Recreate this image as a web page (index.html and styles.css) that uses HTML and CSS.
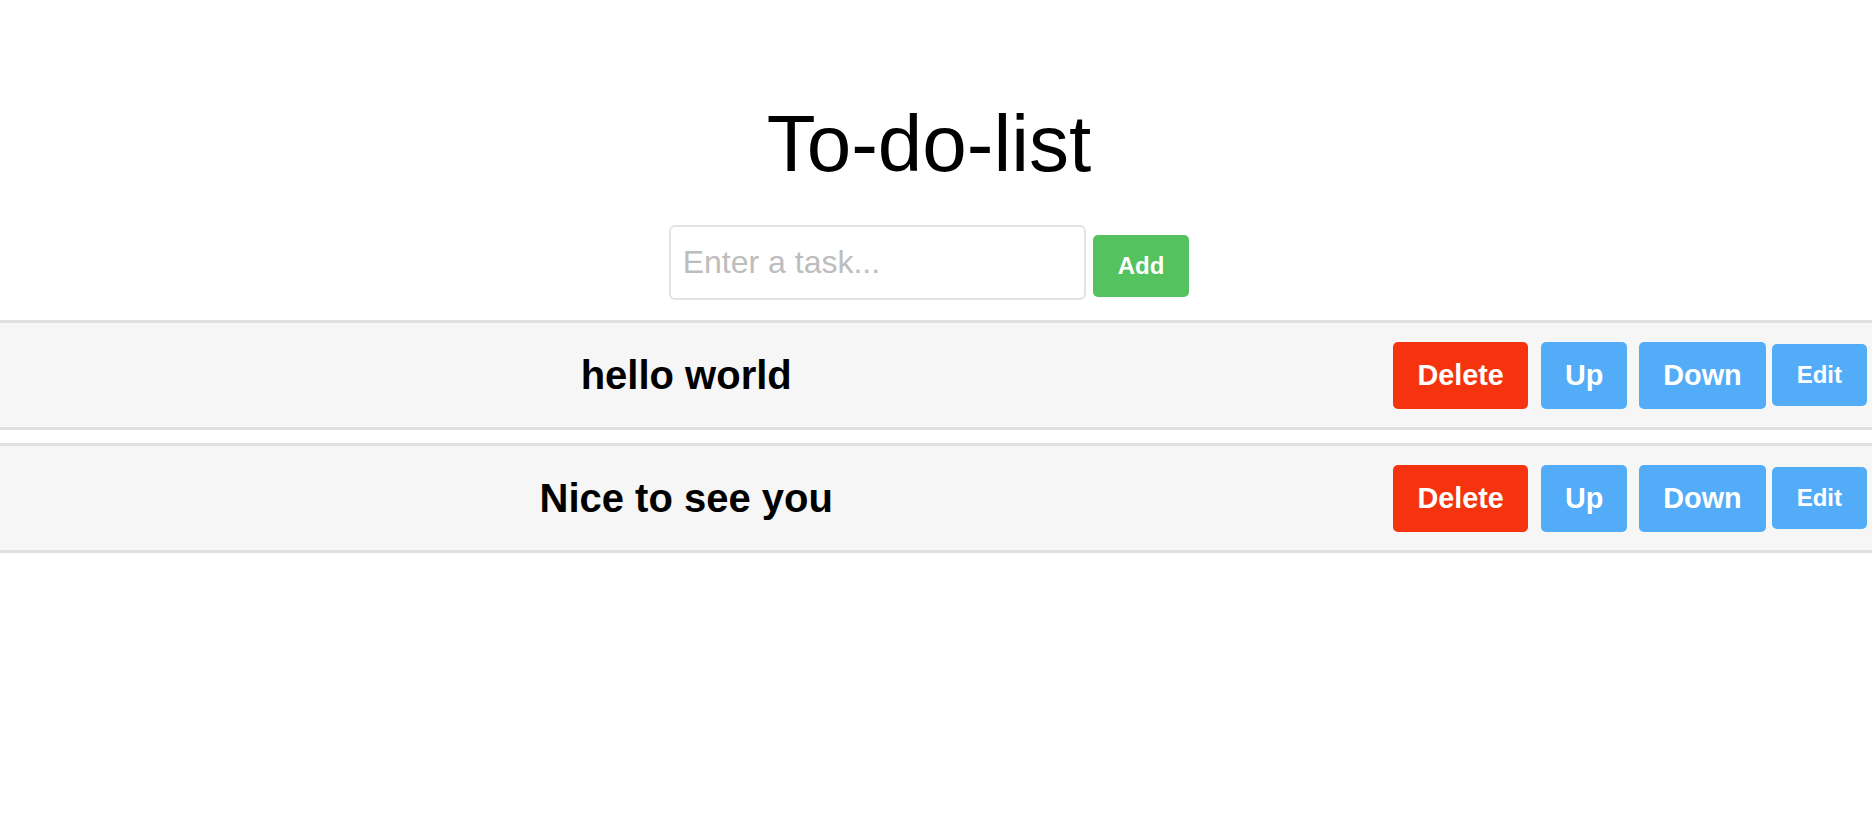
FILE: index.html
```html
<!DOCTYPE html>
<html lang="en">
<head>
<meta charset="utf-8">
<title>To-do-list</title>
<link rel="stylesheet" href="styles.css">
</head>
<body>
<header class="header">
  <h1 class="title">To-do-list</h1>
  <div class="add-row">
    <input class="task-input" type="text" placeholder="Enter a task...">
    <button class="btn btn-add">Add</button>
  </div>
</header>
<ul class="task-list">
  <li class="task">
    <span class="task-text">hello world</span>
    <button class="btn btn-delete">Delete</button>
    <button class="btn btn-up">Up</button>
    <button class="btn btn-down">Down</button>
    <button class="btn btn-edit">Edit</button>
  </li>
  <li class="task">
    <span class="task-text">Nice to see you</span>
    <button class="btn btn-delete">Delete</button>
    <button class="btn btn-up">Up</button>
    <button class="btn btn-down">Down</button>
    <button class="btn btn-edit">Edit</button>
  </li>
</ul>
</body>
</html>
```
FILE: styles.css
```css
* {
  box-sizing: border-box;
}

body {
  margin: 0;
  background: #ffffff;
  font-family: "Liberation Sans", Arial, sans-serif;
  color: #000000;
}

.header {
  display: flex;
  flex-direction: column;
  align-items: center;
  padding-right: 14px;
}

.title {
  margin: 98px 0 0;
  font-size: 80px;
  font-weight: normal;
  line-height: normal;
}

.add-row {
  display: flex;
  align-items: flex-start;
  gap: 7px;
  margin-top: 35px;
}

.task-input {
  width: 417px;
  height: 75px;
  padding: 0 12px;
  border: 2px solid #e3e3e3;
  border-radius: 6px;
  font-family: "Liberation Sans", Arial, sans-serif;
  font-size: 32px;
  color: #000;
  outline: none;
}

.task-input::placeholder {
  color: #bdbdbd;
}

.btn {
  border: none;
  border-radius: 5px;
  color: #ffffff;
  font-family: "Liberation Sans", Arial, sans-serif;
  font-weight: bold;
  font-size: 28.8px;
  line-height: normal;
  padding: 17px 24px;
  cursor: pointer;
}

.btn-add {
  margin-top: 10px;
  background: #53c25f;
  font-size: 24px;
  padding: 17px 25px;
}

.task-list {
  list-style: none;
  margin: 20px 0 0;
  padding: 0;
}

.task {
  display: flex;
  align-items: center;
  height: 110px;
  padding-right: 5px;
  margin-bottom: 13px;
  background: #f6f6f6;
  border-top: 3px solid #e0e0e0;
  border-bottom: 3px solid #e0e0e0;
}

.task-text {
  flex: 1;
  margin-right: 21px;
  text-align: center;
  font-size: 40px;
  font-weight: bold;
}

.btn-delete {
  background: #f5330f;
  margin-right: 13px;
}

.btn-up {
  background: #53acf7;
  margin-right: 12px;
}

.btn-down {
  background: #53acf7;
  margin-right: 6px;
}

.btn-edit {
  background: #53acf7;
  font-size: 24px;
  padding: 17px 25px;
}
```
